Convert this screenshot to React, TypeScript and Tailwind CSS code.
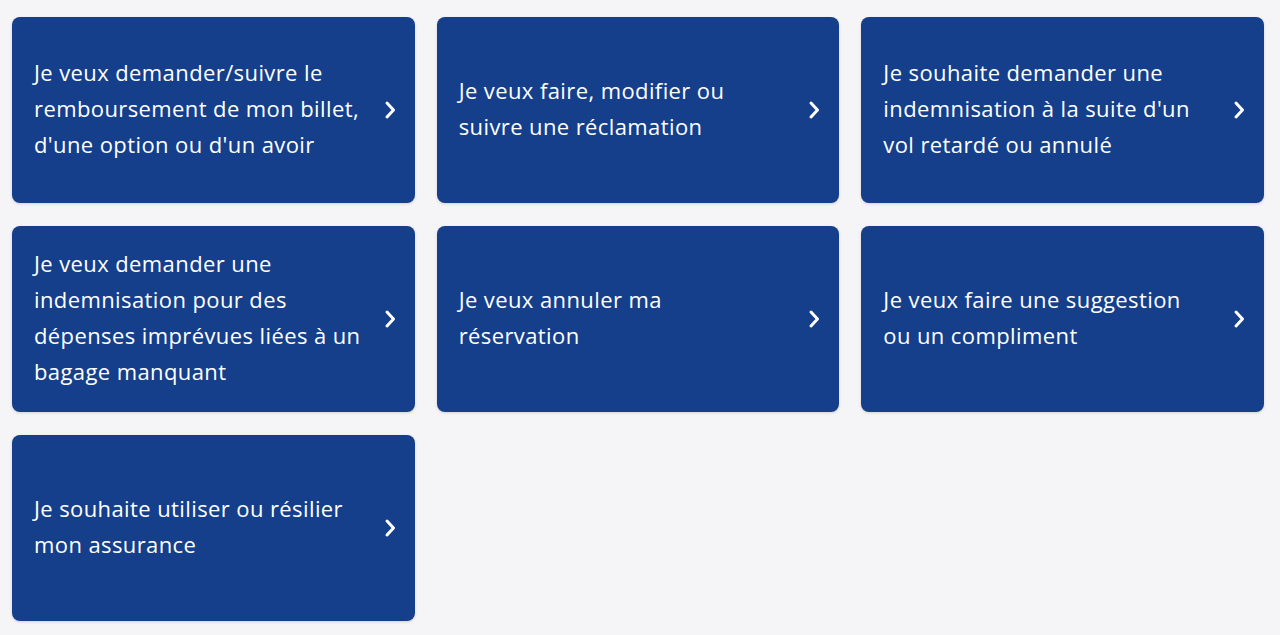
const items = [
  ['Je veux demander/suivre le', 'remboursement de mon billet,', "d'une option ou d'un avoir"],
  ['Je veux faire, modifier ou', 'suivre une réclamation'],
  ['Je souhaite demander une', "indemnisation à la suite d'un", 'vol retardé ou annulé'],
  ['Je veux demander une', 'indemnisation pour des', 'dépenses imprévues liées à un', 'bagage manquant'],
  ['Je veux annuler ma', 'réservation'],
  ['Je veux faire une suggestion', 'ou un compliment'],
  ['Je souhaite utiliser ou résilier', 'mon assurance'],
]

function Chevron() {
  return (
    <svg width="12" height="20" viewBox="0 0 12 20" fill="none" className="shrink-0">
      <path d="M3 3 L9.5 10 L3 17" stroke="white" strokeWidth="3" strokeLinecap="round" strokeLinejoin="round" />
    </svg>
  )
}

export default function App() {
  return (
    <div className="min-h-screen bg-[#f5f5f8] pl-3 pr-4 pt-[17px] font-['Open_Sans','Noto_Sans',sans-serif]">
      <div className="grid grid-cols-3 gap-x-[22px] gap-y-[23px]">
        {items.map((lines) => (
          <a
            key={lines[0]}
            href="#"
            className="flex h-[186px] items-center gap-4 rounded-lg bg-[#153f8b] pl-[22px] pr-[19px] shadow-[0_1px_3px_rgba(0,0,0,0.15)]"
          >
            <span className="flex-1 pb-1 text-[22px] leading-[36px] tracking-[0.4px] text-white">
              {lines.map((l) => (
                <span key={l} className="block whitespace-nowrap">
                  {l}
                </span>
              ))}
            </span>
            <Chevron />
          </a>
        ))}
      </div>
    </div>
  )
}
